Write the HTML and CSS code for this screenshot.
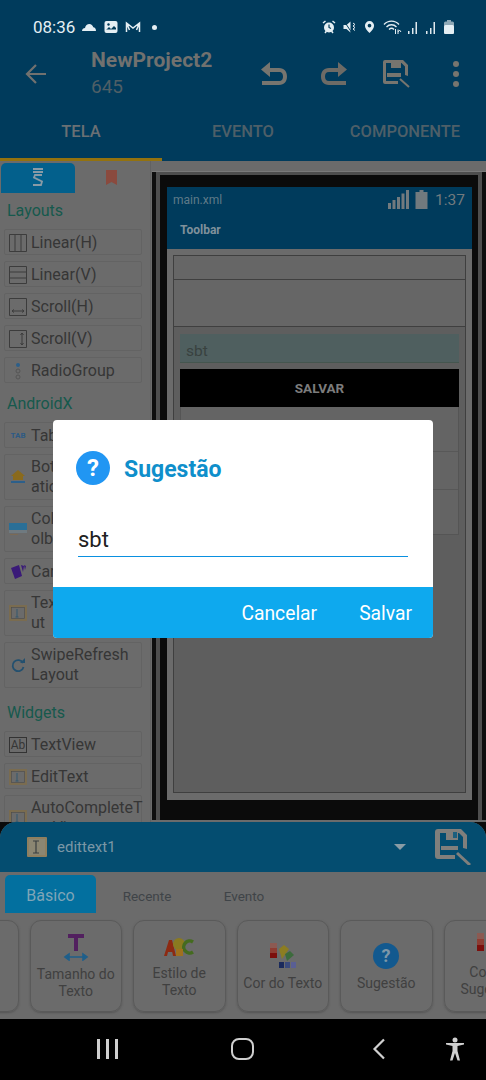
FILE: index.html
```html
<!DOCTYPE html>
<html lang="pt">
<head>
  <meta charset="UTF-8">
  <title>Sugestão</title>
  <link rel="stylesheet" href="styles.css">
</head>
<body>
<div class="app">

  <!-- cabecalho -->
  <header class="top">
    <div class="status">
      <span class="clock">08:36</span>
      <svg class="st" width="16" height="12" viewBox="0 0 16 12"><path d="M1 10c0-2 1.500-3 3-3 .5-2.500 2.300-4 4.300-4 2 0 3.500 1.300 4 3.300 1.500 0 2.700 1.200 2.700 3.700z" fill="#e4eef3"/></svg>
      <svg class="st" width="14" height="14" viewBox="0 0 14 14"><rect x="0.500" y="1" width="13" height="12" rx="2" fill="#e4eef3"/><path d="M2 10l3-3 2 2 3-3 2 2v1.500H2z" fill="#003a58"/><circle cx="4.500" cy="4.500" r="1.200" fill="#003a58"/></svg>
      <svg class="st" width="16" height="12" viewBox="0 0 16 12"><path d="M1.500 11V2l6.500 5 6.500-5v9M1.500 2l3 7M14.500 2l-3 7" fill="none" stroke="#e4eef3" stroke-width="1.500"/></svg>
      <span class="dot"></span>
      <span class="grow"></span>
      <svg class="si" width="14" height="14" viewBox="0 0 14 14"><circle cx="7" cy="7.500" r="5" fill="#e4eef3"/><path d="M1 3l2.500-2M13 3l-2.500-2M3 13l1.500-2M11 13l-1.500-2" stroke="#e4eef3" stroke-width="1.500"/><path d="M7 4.500v3l2 1" fill="none" stroke="#003a58" stroke-width="1.200"/></svg>
      <svg class="si" width="14" height="14" viewBox="0 0 14 14"><path d="M0.500 5h3l4-3.500v11l-4-3.500h-3z" fill="#e4eef3"/><path d="M1 1l8 12" stroke="#003a58" stroke-width="1"/><path d="M10 3l2 1.500-2 1.500 2 1.500-2 1.500 2 1.500" fill="none" stroke="#e4eef3"/></svg>
      <svg class="si loc" width="11" height="14" viewBox="0 0 12 14"><path d="M6 .5a5 5 0 0 1 5 5c0 3-3 6-5 8-2-2-5-5-5-8a5 5 0 0 1 5-5z" fill="#e4eef3"/><circle cx="6" cy="5.500" r="2" fill="#003a58"/></svg>
      <svg class="wifi" width="20" height="16" viewBox="0 0 20 16"><path d="M1 5.500c4-4.500 11-4.500 15 0M3.500 8c2.800-3 7.200-3 10 0M6 10.500c1.500-1.500 3.500-1.500 5 0" fill="none" stroke="#e4eef3" stroke-width="1.300"/><path d="M12.500 10v5M15 15v-4.500M18 13l-1.500-2-1.500 2" fill="none" stroke="#e4eef3"/></svg>
      <svg class="sg" width="13" height="13" viewBox="0 0 13 13"><path d="M1 10h1.500v3H1zM5 7h1.500v6H5zM8.500 1H10v12H8.500z" fill="#dfe9ee"/></svg>
      <svg class="sg" width="13" height="13" viewBox="0 0 13 13"><path d="M1 10h1.500v3H1zM5 7h1.500v6H5zM8.500 1H10v12H8.500z" fill="#dfe9ee"/></svg>
      <svg class="bat" width="10" height="14" viewBox="0 0 10 14"><path d="M3 0h4v1.500h1.500A1.500 1.500 0 0 1 10 3v9.500a1.500 1.500 0 0 1-1.500 1.500h-7A1.500 1.500 0 0 1 0 12.500V3a1.500 1.500 0 0 1 1.500-1.500H3z" fill="#8ea8b6"/><rect y="5" width="10" height="9" rx="1.500" fill="#e4eef3"/></svg>
    </div>

    <div class="toolbar">
      <svg class="back" width="24" height="24" viewBox="0 0 24 24"><path d="M22 12H3M12 3l-9 9 9 9" fill="none" stroke="#71716f" stroke-width="2.200"/></svg>
      <div class="project">
        <div class="p-name">NewProject2</div>
        <div class="p-id">645</div>
      </div>
      <svg class="act a1" width="28" height="26" viewBox="0 0 28 26"><path d="M11 1L2 8.500l9 7.500v-5h9c3 0 4 2 4 4.500S23 20 20 20H3v4h17c5.500 0 8-4 8-8.500S25.500 7 20 7h-9z" fill="#77756f"/></svg>
      <svg class="act a2" width="28" height="26" viewBox="0 0 28 26"><path d="M17 1l9 7.500-9 7.500v-5H8c-3 0-4 2-4 4.500S5 20 8 20h17v4H8c-5.500 0-8-4-8-8.500S2.500 7 8 7h9z" fill="#6d6b66"/></svg>
      <svg class="act a3" width="28" height="28" viewBox="0 0 28 28"><path d="M2 0h18l5 5v11l-3-1V6.500L18.500 3H18v5H8V3H3v18h12v3H2a2 2 0 0 1-2-2V2a2 2 0 0 1 2-2z" fill="#77756f"/><rect x="4" y="13" width="14" height="4" fill="#77756f"/><path d="M17 19l9 8" stroke="#77756f" stroke-width="2"/></svg>
      <div class="more"><i></i><i></i><i></i></div>
    </div>

    <nav class="tabs">
      <div class="tab on">TELA</div>
      <div class="tab t2">EVENTO</div>
      <div class="tab t3">COMPONENTE</div>
    </nav>
  </header>

  <div class="work">
    <!-- paleta -->
    <aside class="side">
      <div class="side-tabs">
        <div class="s-tab on">
          <svg width="12" height="20" viewBox="0 0 12 20"><path d="M1 1h10M1 4h10M10 7H3L2 9.500l8 4L9 17H1" fill="none" stroke="#8a9ba6" stroke-width="1.800"/></svg>
        </div>
        <div class="s-tab">
          <svg width="12" height="16" viewBox="0 0 12 16"><path d="M0 0h11v15l-5.500-3L0 15z" fill="#8a4a3e"/></svg>
        </div>
      </div>

      <h4 class="cat">Layouts</h4>
      <div class="item">
        <svg class="ic" width="18" height="18" viewBox="0 0 18 18"><path d="M.5.5h17v17H.5zM6 .5v17M12 .5v17" fill="none" stroke="#3c3c3c"/></svg>
        <span>Linear(H)</span>
      </div>
      <div class="item">
        <svg class="ic" width="18" height="18" viewBox="0 0 18 18"><path d="M.5.5h17v17H.5zM.5 6h17M.5 12h17" fill="none" stroke="#3c3c3c"/></svg>
        <span>Linear(V)</span>
      </div>
      <div class="item">
        <svg class="ic" width="18" height="18" viewBox="0 0 18 18"><path d="M.5.5h17v17H.5zM3 13h12M3 13l2-1.500M3 13l2 1.500M15 13l-2-1.500M15 13l-2 1.500" fill="none" stroke="#3c3c3c"/></svg>
        <span>Scroll(H)</span>
      </div>
      <div class="item">
        <svg class="ic" width="18" height="18" viewBox="0 0 18 18"><path d="M.5.5h17v17H.5zM13 3v12M13 3l-1.500 2M13 3l1.500 2M13 15l-1.500-2M13 15l1.500-2" fill="none" stroke="#3c3c3c"/></svg>
        <span>Scroll(V)</span>
      </div>
      <div class="item">
        <svg class="ic" width="18" height="18" viewBox="0 0 18 18"><circle cx="9" cy="3" r="2" fill="#2c5f8a"/><circle cx="9" cy="9" r="2" fill="none" stroke="#555"/><circle cx="9" cy="15" r="2" fill="none" stroke="#555"/></svg>
        <span>RadioGroup</span>
      </div>

      <h4 class="cat">AndroidX</h4>
      <div class="item">
        <span class="tab-ic ic">TAB</span>
        <span>TabLayout</span>
      </div>
      <div class="item two">
        <svg class="ic" width="18" height="18" viewBox="0 0 18 18"><path d="M9 2l7 6h-2v4H4V8H2z" fill="#8a6a1c"/><rect x="2" y="13" width="14" height="2" fill="#2c5f8a"/></svg>
        <span>BottomNavig<br>ationView</span>
      </div>
      <div class="item two">
        <svg class="ic" width="18" height="18" viewBox="0 0 18 18"><rect y="3" width="18" height="7" fill="#2a6f97"/><rect y="10" width="18" height="3" fill="#6f7a80"/><rect x="1" y="14" width="8" height="1" fill="#7a6a55"/></svg>
        <span>CollapsingTo<br>olbar</span>
      </div>
      <div class="item">
        <svg class="ic" width="18" height="18" viewBox="0 0 18 18"><path d="M2 5l8-3 3 11-7 3z" fill="#3a1a78"/><path d="M12 2l3 1-1 6zM15 2l2 1-1 4z" fill="#3a1a78"/></svg>
        <span>CardView</span>
      </div>
      <div class="item two">
        <svg class="ic" width="18" height="18" viewBox="0 0 18 18"><rect x="1" y="2" width="16" height="14" fill="none" stroke="#7a6c50" stroke-width="2"/><rect x="2.500" y="3.500" width="13" height="11" fill="none" stroke="#4d4a45" stroke-width=".6"/><path d="M8 5v8M6.500 13h3" stroke="#35586f"/></svg>
        <span>TextInputLayo<br>ut</span>
      </div>
      <div class="item two">
        <svg class="ic" width="18" height="18" viewBox="0 0 18 18"><path d="M14 7a5.500 5.500 0 1 0 .5 4" fill="none" stroke="#23506f" stroke-width="1.800"/><path d="M11 7h5V2z" fill="#23506f"/></svg>
        <span>SwipeRefresh<br>Layout</span>
      </div>

      <h4 class="cat w">Widgets</h4>
      <div class="item">
        <span class="ab ic">Ab</span>
        <span>TextView</span>
      </div>
      <div class="item">
        <svg class="ic" width="18" height="18" viewBox="0 0 18 18"><rect x="1" y="2" width="16" height="14" fill="none" stroke="#7a6c50" stroke-width="2"/><rect x="2.500" y="3.500" width="13" height="11" fill="none" stroke="#4d4a45" stroke-width=".6"/><path d="M8 5v8M6.500 13h3" stroke="#35586f"/></svg>
        <span>EditText</span>
      </div>
      <div class="item two">
        <svg class="ic" width="18" height="18" viewBox="0 0 18 18"><rect x="1" y="2" width="16" height="14" fill="none" stroke="#7a6c50" stroke-width="2"/><rect x="2.500" y="3.500" width="13" height="11" fill="none" stroke="#4d4a45" stroke-width=".6"/><path d="M8 5v8M6.500 13h3" stroke="#35586f"/></svg>
        <span>AutoCompleteT<br>extView</span>
      </div>
    </aside>

    <!-- tela do projeto -->
    <main class="canvas">
      <div class="frame">
        <div class="phone">
          <div class="ph-status">
            <span class="ph-file">main.xml</span>
            <svg class="ph-sig" width="21" height="19" viewBox="0 0 21 19"><path d="M0 13h3v6H0zM4.500 10h3v9h-3zM9 7h3v12H9zM13.500 3.500h3V19h-3zM18 0h3v19h-3z" fill="#727a7e"/></svg>
            <svg class="ph-bat" width="13" height="19" viewBox="0 0 12 19"><path d="M4 0h4v2h4v17H0V2h4z" fill="#727a7e"/></svg>
            <span class="ph-time">1:37</span>
          </div>
          <div class="ph-bar">Toolbar</div>
          <div class="ph-body">
            <div class="outer">
              <div class="row r1"></div>
              <div class="row r2"></div>
              <div class="inner">
                <div class="edit"><span>sbt</span></div>
                <div class="save">SALVAR</div>
                <div class="list">
                  <div class="l-row l1"></div>
                  <div class="l-row l2"></div>
                </div>
              </div>
            </div>
          </div>
        </div>
      </div>
    </main>
  </div>

  <!-- painel de propriedades -->
  <section class="sheet">
    <div class="sheet-head">
      <svg class="sel-ic" width="20" height="20" viewBox="0 0 20 20"><rect width="20" height="20" rx="1" fill="#8f7f5f"/><rect x="2" y="2" width="16" height="16" fill="#8b8672"/><path d="M9 4v12M6 4h6M6 16h6" stroke="#3a3f40" stroke-width="1.200"/></svg>
      <span class="sel-name">edittext1</span>
      <span class="caret"></span>
      <svg class="sheet-save" width="36" height="36" viewBox="0 0 36 36"><path d="M3 0h23l6 6v14l-4-1V8l-4-4h-1v7H11V4H5v22h15v4H3a3 3 0 0 1-3-3V3a3 3 0 0 1 3-3z" fill="#807f7c"/><rect x="6" y="17" width="17" height="4" fill="#807f7c"/><rect x="18" y="3" width="4" height="6" fill="#1c5f7e"/><path d="M22 24l13 12" stroke="#807f7c" stroke-width="3"/></svg>
    </div>
    <div class="sheet-tabs">
      <div class="b-tab on">Básico</div>
      <div class="b-tab b2">Recente</div>
      <div class="b-tab b3">Evento</div>
    </div>
    <div class="cards">
      <div class="card"></div>
      <div class="card">
        <svg width="26" height="28" viewBox="0 0 26 28"><path d="M5 1h16v4h-6v13h-4V5H5z" fill="#52205f"/><path d="M2 24h22M2 24l4-3v6zM24 24l-4-3v6z" stroke="#1f5f8a" stroke-width="1.600" fill="#1f5f8a"/></svg>
        <span>Tamanho do<br>Texto</span>
      </div>
      <div class="card abc">
        <svg width="32" height="20" viewBox="0 0 32 20"><path d="M1 19L6 3h3l4 16h-3l-.8-4H5l-1 4z" fill="#8d2a12"/><circle cx="16" cy="7" r="6" fill="#8a7a20"/><path d="M30 5a6 6 0 1 0 0 10" fill="none" stroke="#446b1f" stroke-width="3.500"/><rect x="13" y="12" width="7" height="7" fill="#a0701e"/></svg>
        <span>Estilo de<br>Texto</span>
      </div>
      <div class="card mid">
        <svg width="26" height="26" viewBox="0 0 26 26"><rect width="7" height="5" fill="#8c5a52"/><rect y="5" width="7" height="5" fill="#8e3d33"/><rect y="10" width="7" height="5" fill="#7c0f0c"/><path d="M9 6l5-4 5 4-7 10z" fill="#8c7d22"/><path d="M15 11l5-3 4 4-7 6z" fill="#3c6b3c"/><rect x="9" y="19" width="5" height="6" fill="#1a2a5c"/><rect x="15" y="19" width="5" height="6" fill="#3a4a7c"/><rect x="21" y="19" width="5" height="6" fill="#5a5f94"/></svg>
        <span>Cor do Texto</span>
      </div>
      <div class="card mid">
        <svg width="26" height="26" viewBox="0 0 26 26"><circle cx="13" cy="13" r="13" fill="#12598f"/><text x="13" y="19" text-anchor="middle" class="q-s">?</text></svg>
        <span>Sugestão</span>
      </div>
      <div class="card">
        <svg width="26" height="26" viewBox="0 0 26 26"><rect width="7" height="6" fill="#8c5a52"/><rect y="6" width="7" height="6" fill="#8e3d33"/><rect y="12" width="7" height="6" fill="#7c0f0c"/></svg>
        <span>Cor da<br>Sugestão</span>
      </div>
    </div>
  </section>

  <!-- barra do sistema -->
  <footer class="nav">
    <div class="recents"><i></i><i></i><i></i></div>
    <div class="home"></div>
    <svg class="nav-back" width="14" height="22" viewBox="0 0 14 22"><path d="M12 1.500L2.500 11l9.500 9.500" fill="none" stroke="#d0d0d0" stroke-width="2.200"/></svg>
    <svg class="access" width="20" height="24" viewBox="0 0 20 24"><circle cx="10" cy="3" r="2.500" fill="#d0d0d0"/><path d="M1 7.500l6.500 1.500v5L5 23.500h2.500L10 16l2.500 7.500H15L12.500 14V9L19 7.500V6H1z" fill="#d0d0d0"/></svg>
  </footer>

  <!-- dialogo -->
  <div class="dialog">
    <div class="d-head">
      <svg class="d-icon" width="34" height="34" viewBox="0 0 34 34"><circle cx="17" cy="17" r="17" fill="#2196f3"/><text x="17" y="25" text-anchor="middle" class="q">?</text></svg>
      <span class="d-title">Sugestão</span>
    </div>
    <div class="d-input">sbt</div>
    <div class="d-foot">
      <button class="d-btn">Cancelar</button>
      <button class="d-btn">Salvar</button>
    </div>
  </div>

</div>
</body>
</html>
```

FILE: styles.css
```css
* {
  box-sizing: border-box;
}
html, body {
  margin: 0;
  padding: 0;
}
body {
  font-family: Roboto, "Liberation Sans", sans-serif;
  background: #6b6b6b;
}
.app {
  position: relative;
  width: 486px;
  height: 1080px;
  overflow: hidden;
  display: flex;
  flex-direction: column;
  background: #0b0b0b;
}

/* cabecalho */
.top {
  height: 161px;
  flex: none;
  background: #003b5c;
}
.status {
  height: 38px;
  padding: 16px 32px 0 33px;
  display: flex;
  align-items: center;
  color: #e4eef3;
}
.clock {
  font-size: 17px;
  margin-right: 6px;
}
.st {
  margin-right: 7px;
}
.dot {
  width: 5px;
  height: 5px;
  border-radius: 50%;
  background: #e4eef3;
  margin-left: 4px;
}
.grow {
  flex: 1;
}
.si {
  margin-right: 7px;
}
.loc {
  margin-right: 8px;
}
.wifi {
  margin-right: 4px;
}
.sg {
  margin-right: 5px;
}
.bat {
  margin-left: 1px;
}
.toolbar {
  height: 72px;
  display: flex;
  align-items: center;
  padding-left: 24px;
}
.project {
  margin-left: 43px;
  width: 169px;
}
.p-name {
  font-size: 21px;
  font-weight: bold;
  color: #71716f;
  line-height: 26px;
}
.p-id {
  font-size: 19px;
  color: #4f5f66;
  line-height: 28px;
}
.act {
  flex: none;
}
.a1 {
  margin-left: -1px;
}
.a2 {
  margin-left: 34px;
}
.a3 {
  margin-left: 34px;
}
.more {
  margin-left: 42px;
  display: flex;
  flex-direction: column;
  gap: 4px;
}
.more i {
  width: 6px;
  height: 6px;
  border-radius: 50%;
  background: #77756f;
}
.tabs {
  height: 51px;
  display: flex;
  font-size: 16.500px;
  font-weight: 500;
  color: #4e5f68;
}
.tab {
  width: 162px;
  line-height: 44px;
  text-align: center;
}
.tab.on {
  color: #6a7074;
  border-bottom: 3px solid #93720f;
}

/* area de trabalho */
.work {
  height: 661px;
  flex: none;
  display: flex;
  background: #6b6b6b;
}
.side {
  width: 151px;
  flex: none;
  border-right: 1px solid #626262;
  padding: 2px 0 0 0;
  overflow: hidden;
}
.side-tabs {
  display: flex;
  height: 30px;
  padding-left: 1px;
}
.s-tab {
  width: 74px;
  display: flex;
  align-items: center;
  justify-content: center;
}
.s-tab.on {
  background: #03608c;
  border-radius: 5px 5px 0 0;
}
.cat {
  margin: 7px 0 0 7px;
  height: 22px;
  font-size: 16px;
  font-weight: normal;
  line-height: 22px;
  color: #16594d;
}
.item + .cat {
  margin-top: 10px;
}
.item + .cat.w {
  margin-top: 14px;
}
.item {
  width: 138px;
  min-height: 26px;
  margin: 6px 0 0 4px;
  padding: 2px 2px 0 4px;
  display: flex;
  align-items: center;
  gap: 4px;
  border: 1px solid #636363;
  border-radius: 2px;
  font-size: 16px;
  line-height: 20px;
  color: #363636;
}
.cat + .item {
  margin-top: 7px;
}
.item.two {
  padding-top: 2px;
  padding-bottom: 2px;
}
.item > span:last-child {
  white-space: nowrap;
  min-width: 0;
}
.ic {
  flex: none;
  width: 18px;
}
.tab-ic {
  font-size: 8px;
  font-weight: bold;
  color: #2d5a85;
  text-align: center;
}
.ab {
  border: 1px solid #333;
  font-size: 12px;
  line-height: 14px;
  text-align: center;
}

/* canvas */
.canvas {
  flex: 1;
  min-width: 0;
  padding: 11px 0 0 1px;
}
.frame {
  width: 334px;
  height: 648px;
  padding: 3px 4px 0 4px;
  background: #4e4e4e;
  border: solid #0e0e0e;
  border-width: 0 4px;
  box-shadow: 0 -1px 0 #7a7a7a;
}
.phone {
  width: 318px;
  height: 645px;
  border: solid #0b0b0b;
  border-width: 12px 6px 20px 7px;
  background: #6b6b6b;
}
.ph-status {
  height: 25px;
  background: #003b5c;
  display: flex;
  align-items: center;
  padding: 0 7px 0 6px;
}
.ph-file {
  font-size: 12px;
  color: #5f7a88;
  flex: 1;
}
.ph-bat {
  margin-left: 6px;
}
.ph-time {
  font-size: 15.500px;
  color: #727a7e;
  margin-left: 7px;
}
.ph-bar {
  height: 37px;
  background: #003b5c;
  padding: 0 13px;
  font-size: 12px;
  font-weight: bold;
  color: #7f919b;
  line-height: 37px;
}
.ph-body {
  height: 551px;
  padding: 6px 6px 7px 6px;
}
.outer {
  height: 100%;
  border: 1px solid #3f3f3f;
  background: #5e5e5e;
}
.row {
  border-bottom: 1px solid #3f3f3f;
  background: #666;
}
.r1 {
  height: 24px;
}
.r2 {
  height: 47px;
}
.inner {
  padding: 7px 6px 0 6px;
}
.edit {
  height: 29px;
  background: #4f5f5f;
  padding: 0 6px;
  font-size: 15.500px;
  line-height: 35px;
  color: #39423f;
  border-bottom: 1px solid #45564f;
}
.save {
  height: 38px;
  margin-top: 6px;
  background: #000;
  color: #7c7c7c;
  font-size: 13.500px;
  font-weight: bold;
  text-align: center;
  line-height: 38px;
}
.list {
  border: 1px solid #555;
  border-top: none;
  height: 128px;
  background: #646464;
}
.l-row {
  border-bottom: 1px solid #585858;
}
.l1 {
  height: 45px;
}
.l2 {
  height: 38px;
}

/* painel inferior */
.sheet {
  height: 197px;
  flex: none;
  background: #6b6b6b;
  display: flex;
  flex-direction: column;
  overflow: hidden;
  border-radius: 16px 16px 0 0;
  position: relative;
}
.sheet-head {
  height: 50px;
  flex: none;
  background: #044d70;
  display: flex;
  align-items: center;
  padding-left: 27px;
}
.sel-name {
  margin-left: 10px;
  font-size: 15px;
  color: #7b97a6;
  flex: 1;
}
.caret {
  border: solid transparent;
  border-width: 6px 6px 0 6px;
  border-top-color: #8a9ca5;
  margin-right: 29px;
}
.sheet-save {
  margin-right: 15px;
}
.sheet-tabs {
  height: 41px;
  flex: none;
  padding: 3px 0 0 5px;
  display: flex;
  font-size: 13.500px;
  color: #3f4448;
}
.b-tab {
  text-align: center;
  line-height: 42px;
}
.b-tab.on {
  width: 91px;
  background: #03709f;
  border-radius: 5px 5px 0 0;
  font-size: 16px;
  color: #7fa5b7;
}
.b2 {
  width: 102px;
}
.b3 {
  width: 90px;
  margin-left: 1px;
}
.cards {
  flex: 1;
  display: flex;
  gap: 11px;
  margin-left: -74px;
  padding-top: 7px;
}
.card {
  width: 92.500px;
  height: 92px;
  flex: none;
  border: 1px solid #5a5a5a;
  border-radius: 11px;
  box-shadow: 0 1px 2px #555;
  display: flex;
  flex-direction: column;
  align-items: center;
  padding-top: 12px;
  font-size: 14px;
  line-height: 17px;
  color: #404040;
  text-align: center;
}
.card span {
  margin-top: 5px;
}
.card.abc {
  padding-top: 16px;
}
.card.abc span {
  margin-top: 8px;
}
.card.mid {
  padding-top: 22px;
}
.card.mid span {
  margin-top: 6px;
}

/* barra do sistema */
.nav {
  flex: 1;
  background: #000;
  display: flex;
  align-items: center;
  padding-left: 97px;
}
.recents {
  display: flex;
  gap: 6px;
  margin-top: -2px;
}
.recents i {
  width: 3px;
  height: 20px;
  background: #cfcfcf;
}
.home {
  width: 23px;
  height: 22px;
  border: 2.500px solid #cfcfcf;
  border-radius: 8px;
  margin: -2px 0 0 113px;
}
.nav-back {
  margin: -2px 0 0 118px;
}
.access {
  margin: -2px 0 0 59px;
}

/* dialogo */
.dialog {
  position: absolute;
  left: 53px;
  top: 420px;
  width: 380px;
  height: 218px;
  background: #fff;
  border-radius: 4px;
  overflow: hidden;
  display: flex;
  flex-direction: column;
}
.d-head {
  display: flex;
  align-items: center;
  padding: 31px 0 0 23px;
}
.d-icon {
  flex: none;
}
.d-title {
  margin: 2px 0 0 14px;
  font-size: 23px;
  font-weight: bold;
  color: #0f8fcb;
}
.d-input {
  margin: 37px 25px 0 25px;
  height: 35px;
  border-bottom: 1px solid #0a90e0;
  font-size: 22px;
  line-height: 36px;
  color: #212121;
}
.d-foot {
  margin-top: auto;
  height: 51px;
  background: #0ea9ee;
  display: flex;
  justify-content: flex-end;
  align-items: center;
  gap: 42px;
  padding: 1px 21px 0 0;
}
.d-btn {
  border: none;
  background: none;
  padding: 0;
  font-family: Roboto, "Liberation Sans", sans-serif;
  font-size: 19.300px;
  color: #fff;
}
.q {
  font-family: Roboto, "Liberation Sans", sans-serif;
  font-size: 24px;
  font-weight: bold;
  fill: #fff;
}
.q-s {
  font-family: Roboto, "Liberation Sans", sans-serif;
  font-size: 18px;
  font-weight: bold;
  fill: #7d97a8;
}
```
